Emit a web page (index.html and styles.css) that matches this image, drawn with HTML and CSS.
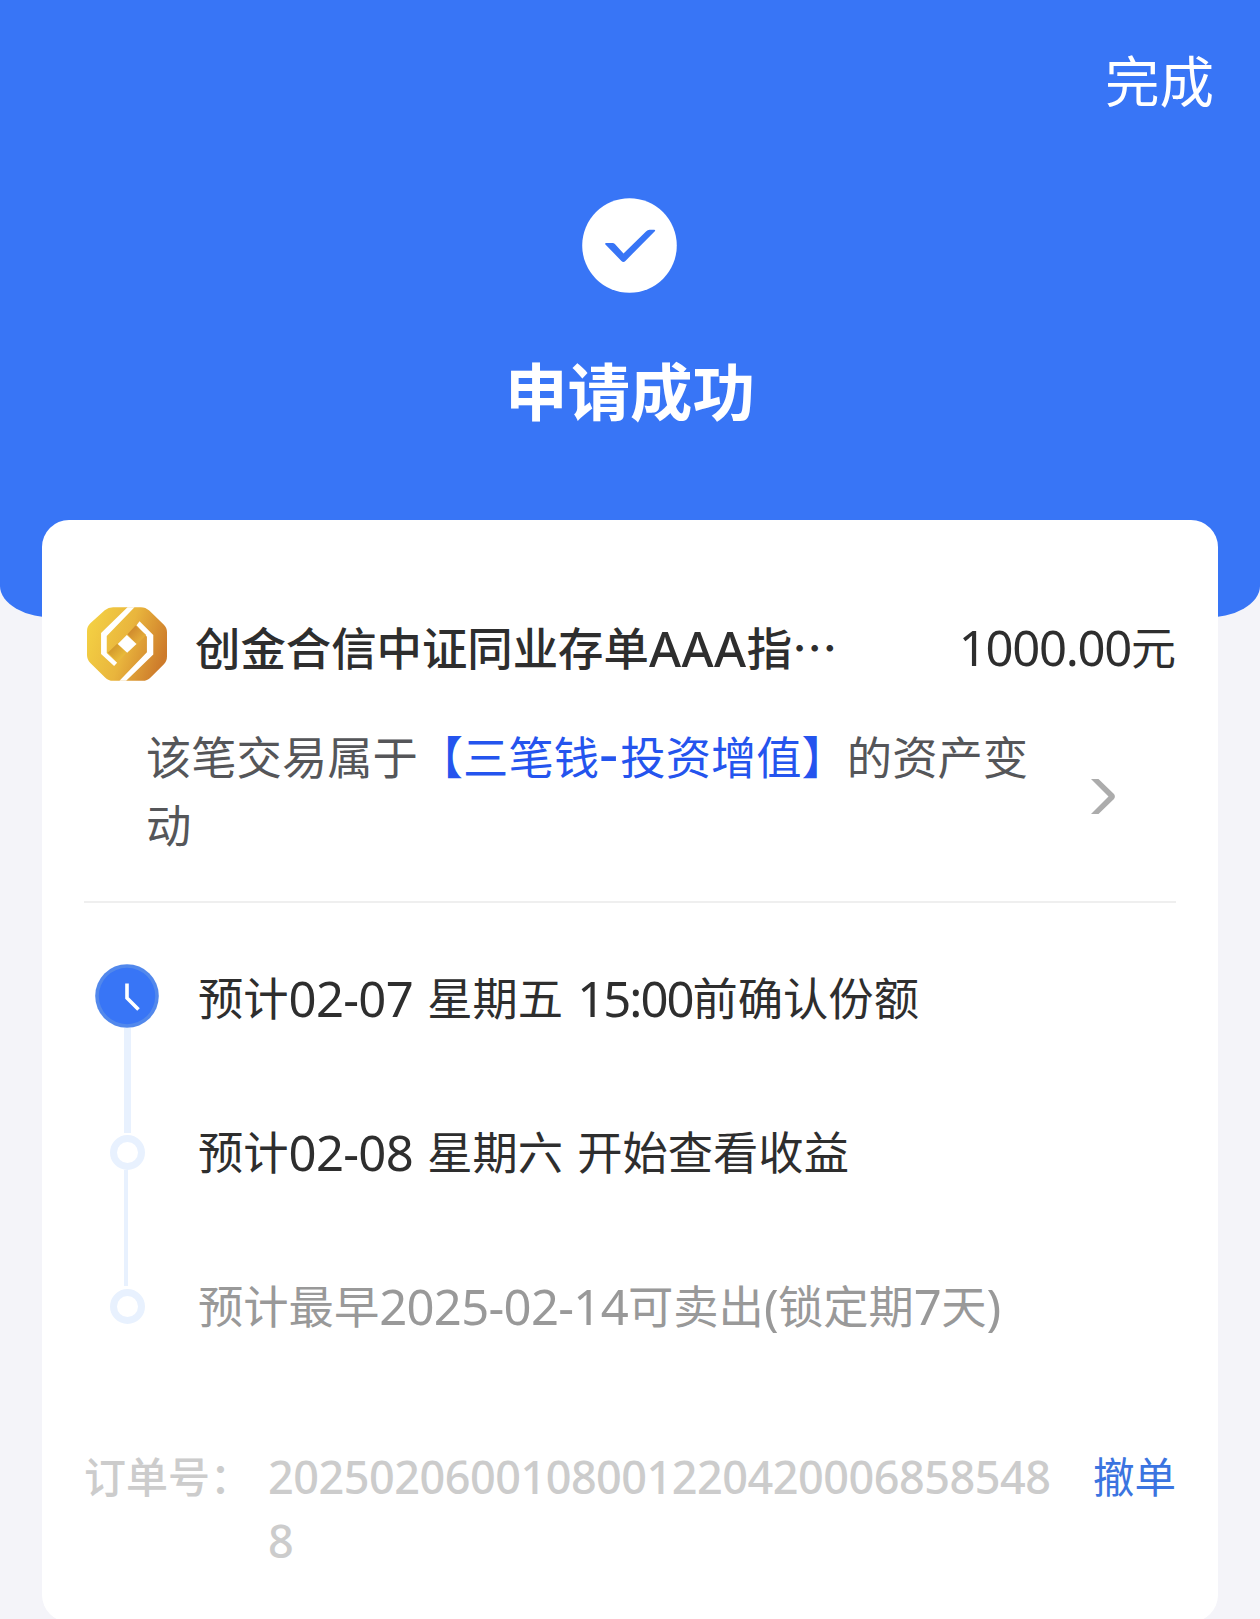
FILE: index.html
```html
<!DOCTYPE html>
<html lang="zh-CN">

<head>
    <meta charset="UTF-8" />
    <meta name="viewport" content="width=device-width, initial-scale=1.0" />
    <title>申请成功</title>
    <link rel="stylesheet" href="styles.css">
</head>

<body>

    <header>
        <div class="nav">
            <a class="done">完成</a>
        </div>
        <div class="result">
            <svg class="result-icon" viewBox="0 0 95 95">
                <circle cx="47.5" cy="47.5" r="47.3" fill="#fff" />
                <path d="M24.5 45h6q1.4 0 2.4 1L41.5 55.5 64 33.4q1.6-1.6 3.6-1.6h4.6q1.6.2.6 1.5L43.4 62.9q-2 2-4 0L23.2 46.3q-.6-1.2 1.3-1.3z" fill="#3875f6" />
            </svg>
            <h1>申请成功</h1>
        </div>
    </header>

    <main class="card">
        <!-- 基金信息 -->
        <div class="fund">
            <svg class="fund-logo" viewBox="264 323 239 220">
                <defs>
                    <linearGradient id="gold" gradientUnits="userSpaceOnUse" x1="275" y1="370" x2="500" y2="450">
                        <stop offset="0" stop-color="#f3cf43" />
                        <stop offset="0.5" stop-color="#e9b53d" />
                        <stop offset="1" stop-color="#cd7b2b" />
                    </linearGradient>
                    <linearGradient id="foldTop" x1="0" y1="0" x2="1" y2="1">
                        <stop offset="0" stop-color="#c77d28" />
                        <stop offset="1" stop-color="#efbd40" />
                    </linearGradient>
                    <linearGradient id="foldBottom" x1="0" y1="0" x2="1" y2="1">
                        <stop offset="0" stop-color="#c98a25" />
                        <stop offset="1" stop-color="#f4cb42" />
                    </linearGradient>
                </defs>
                <path d="M342 323h83q14 0 25 10l43 42q10 10 10 23v72q0 14-10 24l-39 39q-10 10-24 10h-88q-14 0-24-10l-44-43q-10-10-10-24v-72q0-13 10-23l43-39q11-9 25-9z" fill="url(#gold)" />
                <path d="M385 323h21l-83 86v51l31 29-9 10-39-36v-63z" fill="#fff" />
                <path d="M381 543h-20l82-85v-47l-31-34 9-12 41 41v58z" fill="#fff" />
                <path d="M409 378l32 28-29 28-27-30z" fill="url(#foldTop)" />
                <path d="M354 432l28 27-27 27-29-27z" fill="url(#foldBottom)" />
                <path d="M383 406l29 27-28 26-28-26z" fill="#fff" />
            </svg>
            <div class="fund-name">创金合信中证同业存单<span class="latin">AAA</span>指<span class="dots">⋯</span></div>
            <div class="fund-amount"><span class="num">1000.00</span>元</div>
        </div>

        <div class="note">
            <p>该笔交易属于<a>【三笔钱<span class="dash">-</span>投资增值】</a>的资产变动</p>
            <svg class="arrow" viewBox="0 0 24 35">
                <path d="M0 0h7.5L23 15q1.8 2.5 0 5L7.5 35H0l17.5-17.5z" fill="#acacac" />
            </svg>
        </div>

        <!-- 进度 -->
        <ul class="steps">
            <li class="step active">
                <div class="step-mark">
                    <svg class="clock" viewBox="0 0 64 64">
                        <circle cx="32" cy="32" r="31.8" fill="#5288ec" />
                        <circle cx="32" cy="32" r="28.2" fill="#3875f6" />
                        <path d="M32 19.500v14.500l11.500 11.500" fill="none" stroke="#fff" stroke-width="3.600" />
                    </svg>
                    <span class="line"></span>
                </div>
                <p>预计<span class="num">02-07</span> 星期五 <span class="num time">15:00</span>前确认份额</p>
            </li>
            <li class="step">
                <div class="step-mark">
                    <span class="dot"></span>
                    <span class="line"></span>
                </div>
                <p>预计<span class="num">02-08</span> 星期六 开始查看收益</p>
            </li>
            <li class="step pending">
                <div class="step-mark">
                    <span class="dot"></span>
                </div>
                <p>预计最早<span class="num">2025-02-14</span>可卖出<span class="num">(</span>锁定期<span class="num">7</span>天<span class="num">)</span></p>
            </li>
        </ul>

        <div class="order">
            <span class="order-label">订单号：</span>
            <span class="order-no">20250206001080012204200068585488</span>
            <a class="cancel">撤单</a>
        </div>
    </main>

</body>

</html>
```

FILE: styles.css
```css
* {
    margin: 0;
    padding: 0;
    box-sizing: border-box;
}

body {
    height: 1619px;
    overflow: hidden;
    background: #f4f4f9;
    color: #2e2e2e;
    font-family: 'Noto Sans CJK SC', sans-serif;
    font-size: 45px;
}

header {
    height: 618px;
    background: #3875f6;
    border-radius: 0 0 56px 56px / 0 0 32px 32px;
    color: #fff;
}

.nav {
    display: flex;
    justify-content: flex-end;
    height: 198px;
    padding: 39px 46px 0 0;
}

.done {
    font-size: 54.5px;
    line-height: 80px;
}

.result {
    display: flex;
    flex-direction: column;
    align-items: center;
}

.result-icon {
    width: 95px;
    height: 95px;
    margin-right: 1px;
}

h1 {
    margin-top: 51px;
    font-size: 62.5px;
    font-weight: bold;
    line-height: 90px;
}

.card {
    height: 1102px;
    margin: -98px 42px 0;
    padding: 87px 42px 0;
    background: #fff;
    border-radius: 27px;
}

.fund {
    display: flex;
    align-items: center;
    height: 74px;
    padding-left: 3px;
}

.fund-logo {
    width: 80px;
    height: 74px;
}

.fund-name {
    margin-left: 28px;
    padding-top: 3px;
    font-size: 45.4px;
    font-weight: 500;
    line-height: 66px;
    white-space: nowrap;
}

.fund-amount {
    margin-left: auto;
    padding-top: 3px;
    line-height: 66px;
    white-space: nowrap;
}

.latin,
.num {
    font-family: 'Noto Sans', sans-serif;
    font-size: 49px;
    line-height: 1;
    vertical-align: -1px;
}

.latin {
    letter-spacing: 0.5px;
}

.num {
    letter-spacing: -0.7px;
}

.fund-amount .num {
    letter-spacing: -1.3px;
}

.num.time {
    letter-spacing: -2px;
}

.dash {
    font-family: 'Noto Sans', sans-serif;
    font-size: 60px;
    line-height: 1;
    letter-spacing: 2px;
}

.note {
    display: flex;
    align-items: center;
    height: 222px;
    padding: 0 61px 4px 62px;
    border-bottom: 2px solid #efefef;
    color: #555659;
}

.note p {
    width: 900px;
    font-size: 45.3px;
    line-height: 68px;
}

.note a {
    color: #2454ee;
}

.arrow {
    width: 24px;
    height: 35px;
    margin: 14px 0 0 auto;
}

.steps {
    padding: 61px 0 0 11px;
    list-style: none;
}

.step {
    display: flex;
    height: 154px;
}

.step p {
    margin-left: 39px;
    font-size: 45.3px;
    line-height: 64px;
    word-spacing: 4px;
    white-space: nowrap;
}

.step-mark {
    display: flex;
    flex-direction: column;
    align-items: center;
    width: 64px;
}

.clock {
    width: 64px;
    height: 64px;
    flex-shrink: 0;
}

.dot {
    width: 35px;
    height: 35px;
    margin-top: 17px;
    flex-shrink: 0;
    border: 7px solid #e8f1fe;
    border-radius: 50%;
}

.line {
    width: 4px;
    height: 116px;
    margin-right: 3px;
    flex-shrink: 0;
    background: #e8f1fe;
}

.active .line {
    width: 7px;
    height: 105px;
    margin-right: 0;
}

.pending {
    color: #999;
}

.order {
    display: flex;
    margin-top: 17px;
    font-size: 42px;
    font-weight: 500;
    line-height: 64px;
    color: #ccc;
}

.order-label {
    width: 184px;
    white-space: nowrap;
}

.order-no {
    width: 790px;
    padding-top: 2px;
    font-family: 'Noto Sans', sans-serif;
    font-size: 45px;
    letter-spacing: -0.5px;
    word-break: break-all;
}

.cancel {
    margin-left: auto;
    font-size: 41.5px;
    font-weight: 400;
    color: #3b74e0;
}
```
